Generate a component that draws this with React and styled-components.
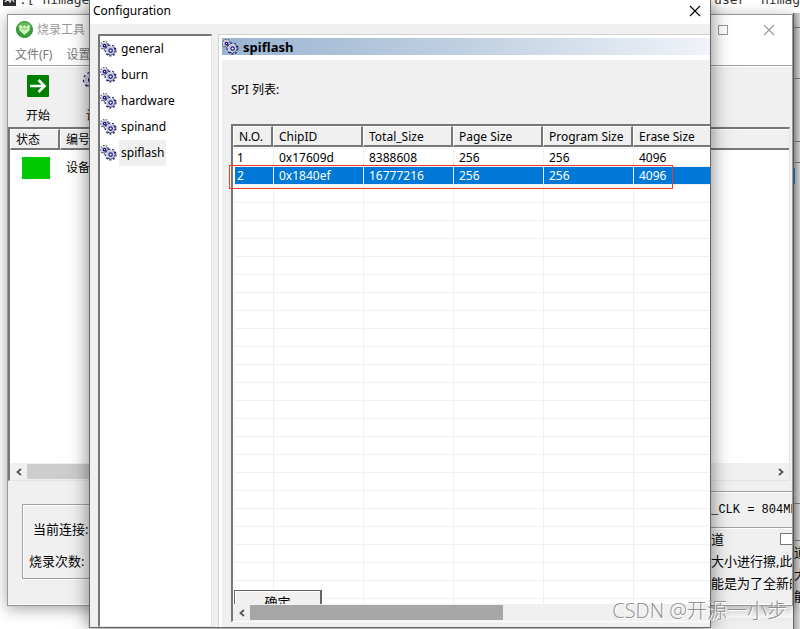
import React, { useState } from "react";
import styled, { createGlobalStyle } from "styled-components";

const pages = ["general", "burn", "hardware", "spinand", "spiflash"];

const columns = [
  { name: "N.O.", width: 40 },
  { name: "ChipID", width: 90 },
  { name: "Total_Size", width: 90 },
  { name: "Page Size", width: 90 },
  { name: "Program Size", width: 90 },
  { name: "Erase Size", width: 90 },
];

const chips = [
  ["1", "0x17609d", "8388608", "256", "256", "4096"],
  ["2", "0x1840ef", "16777216", "256", "256", "4096"],
];

const emptyRows = Array.from({ length: 60 });

export default function App() {
  const [page, setPage] = useState("spiflash");
  const [selected, setSelected] = useState(1);

  return (
    <Desktop>
      <GlobalStyle />
      <Editor>
        <PromptIcon />
        <span>:[ nimage</span>
        <span>user&nbsp; nimage</span>
      </Editor>
      <Underlay />
      <SideWindow />
      <MainWindow />
      <Dialog>
        <DialogTitle>
          <h1>Configuration</h1>
          <IconButton type="button" aria-label="close">
            <CloseIcon color="#000" />
          </IconButton>
        </DialogTitle>
        <DialogBody>
          {/* page list */}
          <PageList>
            {pages.map((name) => (
              <PageButton
                key={name}
                type="button"
                $active={name === page}
                onClick={() => setPage(name)}
              >
                <GearsIcon />
                <span>{name}</span>
              </PageButton>
            ))}
          </PageList>
          {/* end of page list */}
          <Page>
            <PageTitle>
              <GearsIcon />
              <h2>{page}</h2>
            </PageTitle>
            <PageContent>
              <p>SPI 列表:</p>
              <ListWrap>
                <ListBox>
                  <ListView>
                    <ChipTable>
                      <colgroup>
                        {columns.map((col) => (
                          <col key={col.name} width={col.width} />
                        ))}
                      </colgroup>
                      <thead>
                        <tr>
                          {columns.map((col) => (
                            <th key={col.name}>
                              <HeaderCell>{col.name}</HeaderCell>
                            </th>
                          ))}
                        </tr>
                      </thead>
                      <tbody>
                        {chips.map((chip, index) => (
                          <ChipRow
                            key={chip[0]}
                            $selected={index === selected}
                            onClick={() => setSelected(index)}
                          >
                            {chip.map((value, i) => (
                              <td key={i}>{value}</td>
                            ))}
                          </ChipRow>
                        ))}
                        {emptyRows.map((_, index) => (
                          <ChipRow key={index}>
                            {columns.map((col) => (
                              <td key={col.name} />
                            ))}
                          </ChipRow>
                        ))}
                      </tbody>
                    </ChipTable>
                    <OkButton type="button">确定</OkButton>
                  </ListView>
                  <ScrollBar>
                    <ArrowButton type="button" aria-label="scroll left">
                      <Arrow />
                    </ArrowButton>
                    <Thumb $size="53%" $color="#a6a6a6" />
                  </ScrollBar>
                </ListBox>
                <Highlight />
              </ListWrap>
            </PageContent>
          </Page>
        </DialogBody>
      </Dialog>
      <Watermark>CSDN @开源一小步</Watermark>
    </Desktop>
  );
}

function MainWindow() {
  return (
    <Window>
      <TitleBar>
        <LogoIcon />
        <span>烧录工具</span>
        <WindowButtons>
          <IconButton type="button" aria-label="maximize">
            <svg width="12" height="12" viewBox="0 0 12 12">
              <rect x="1.5" y="1.5" width="9" height="9" fill="none" stroke="#999" />
            </svg>
          </IconButton>
          <IconButton type="button" aria-label="close">
            <CloseIcon color="#999" />
          </IconButton>
        </WindowButtons>
      </TitleBar>
      <MenuBar>
        <button type="button">文件(F)</button>
        <button type="button">设置</button>
      </MenuBar>
      <ToolBar>
        <ToolButton type="button">
          <StartIcon />
          开始
        </ToolButton>
        <ToolButton type="button">
          <BigGearIcon />
          设置
        </ToolButton>
      </ToolBar>
      <DeviceList>
        <DeviceTable>
          <colgroup>
            <col width="50" />
            <col />
          </colgroup>
          <thead>
            <tr>
              <th>
                <HeaderCell>状态</HeaderCell>
              </th>
              <th>
                <HeaderCell $last>编号</HeaderCell>
              </th>
            </tr>
          </thead>
          <tbody>
            <tr>
              <td>
                <Status />
              </td>
              <td>设备</td>
            </tr>
          </tbody>
        </DeviceTable>
        <ScrollBar>
          <ArrowButton type="button" aria-label="scroll left">
            <Arrow />
          </ArrowButton>
          <Thumb $size="60%" $color="#cdcdcd" />
          <Spacer />
          <ArrowButton type="button" aria-label="scroll right">
            <Arrow right />
          </ArrowButton>
        </ScrollBar>
      </DeviceList>
      <Footer>
        <StatusBox>
          <p>当前连接:</p>
          <p>烧录次数:</p>
        </StatusBox>
        <InfoBox>
          <Clock>U_CLK = 804MB</Clock>
          <Channel>
            道
            <input type="checkbox" aria-label="道" />
          </Channel>
          <p>大小进行擦,此</p>
          <p>能是为了全新的</p>
        </InfoBox>
      </Footer>
    </Window>
  );
}

function SideWindow() {
  return (
    <SideWrapper>
      <SidePart $height="15px" />
      <SidePart $height="51px" />
      <SidePart $height="63px" />
      <SidePart $height="21px" />
      <SidePart $height="5px" $color="transparent" />
      <SideMark />
      <Spacer />
      <SidePart $height="17px" $color="#ccc" />
      <SidePart $height="9px" />
      <SidePart $height="37px" />
      <SideText>
        <span>道</span>
        <span>大</span>
        <span>能</span>
      </SideText>
    </SideWrapper>
  );
}

/* icons */

function Gear({ x, y, r, color }) {
  const tooth = (2 * Math.PI * r) / 18;
  return (
    <g transform={`translate(${x} ${y})`}>
      <circle
        r={r}
        fill="none"
        stroke={color}
        strokeWidth="2.2"
        strokeDasharray={`${tooth} ${tooth}`}
      />
      <circle r={r} fill="#e2e2ea" />
      <path
        d={`M${r * 0.7} ${-r * 0.7}A${r} ${r} 0 0 1 ${-r * 0.7} ${r * 0.7}`}
        fill="none"
        stroke={color}
        strokeWidth="1"
      />
      <circle r={r * 0.75} fill="none" stroke="#b4b4c4" strokeWidth="0.8" />
      <circle r={r * 0.36} fill="#fff" stroke="#10108a" strokeWidth="1.2" />
    </g>
  );
}

function GearsIcon() {
  return (
    <svg width="17" height="16" viewBox="0 0 17 16">
      <Gear x={4.6} y={4.6} r={3.6} color="#55556a" />
      <Gear x={10.6} y={9.6} r={4.9} color="#15155e" />
    </svg>
  );
}

function BigGearIcon() {
  return (
    <svg width="32" height="28" viewBox="0 0 32 28">
      <Gear x={9} y={9} r={7} color="#10107a" />
      <Gear x={21} y={18} r={7} color="#10107a" />
    </svg>
  );
}

function LogoIcon() {
  return (
    <svg width="17" height="17" viewBox="0 0 17 17">
      <circle cx="8.5" cy="8.5" r="8" fill="#3a9e3a" stroke="#2a8a2e" />
      <path d="M1.5 6a7.4 7.4 0 0 1 14 0z" fill="#62b85c" />
      <path
        d="M3 5l2-1.5L6.5 6 8.5 4l2 2L12 3.5 14 5l-.5 4.5L8.5 14 3.5 9.5z"
        fill="#cdf3b8"
      />
      <path
        d="M5.5 8.5L7 7l1.5 2L10 7l1.5 1.5"
        fill="none"
        stroke="#79c76c"
      />
    </svg>
  );
}

function PromptIcon() {
  return (
    <svg width="13" height="14" viewBox="0 0 13 14">
      <rect width="13" height="14" fill="#2b2b33" />
      <path d="M2 10l3-3 2 3 2-4 2 4" fill="none" stroke="#ddd" strokeWidth="1.4" />
    </svg>
  );
}

function StartIcon() {
  return (
    <svg width="22" height="28" viewBox="0 -4 22 28">
      <rect width="22" height="22" rx="1" fill="#008000" />
      <path
        d="M3 11h14M11.5 5l6 6-6 6"
        fill="none"
        stroke="#fff"
        strokeWidth="2.6"
      />
    </svg>
  );
}

function CloseIcon({ color }) {
  return (
    <svg width="12" height="12" viewBox="0 0 12 12">
      <path d="M1 1l10 10M11 1L1 11" stroke={color} strokeWidth="1.1" />
    </svg>
  );
}

function Arrow({ right }) {
  return (
    <svg width="8" height="8" viewBox="0 0 8 8">
      <path
        d={right ? "M2 1l3.5 3L2 7" : "M6 1L2.5 4 6 7"}
        fill="none"
        stroke="#555"
        strokeWidth="1.8"
      />
    </svg>
  );
}

/* styles */

const GlobalStyle = createGlobalStyle`
  * {
    box-sizing: border-box;
  }
  body {
    margin: 0;
    font-family: "Noto Sans", "Noto Sans CJK SC", sans-serif;
    font-size: 12px;
    line-height: 18px;
    color: #000;
  }
  h1, h2, p {
    margin: 0;
    font-size: inherit;
    font-weight: normal;
  }
  button {
    padding: 0;
    border: 0;
    background: none;
    color: inherit;
    font: inherit;
    white-space: nowrap;
  }
  svg {
    display: block;
    flex: none;
  }
`;

const Desktop = styled.main`
  position: relative;
  height: 100vh;
  overflow: hidden;
  background: #fff;
`;

const Editor = styled.div`
  display: flex;
  gap: 3px;
  height: 14px;
  margin: -8px -8px 0 0;
  padding-left: 3px;
  color: #333;
  font-family: "DejaVu Sans Mono", monospace;
  font-size: 13px;
  line-height: 16px;
  white-space: pre;
  span:last-child {
    margin-left: auto;
  }
`;

/* the bottom edge of the window that lies under all others */
const Underlay = styled.div`
  position: absolute;
  right: 7px;
  bottom: 0;
  left: 88px;
  height: 11px;
  background: #f0f0f0;
`;

const SideWrapper = styled.div`
  position: absolute;
  top: 13px;
  right: 0;
  bottom: 0;
  display: flex;
  flex-direction: column;
  width: 7px;
  overflow: hidden;
  border-left: 1px solid #666;
  background: linear-gradient(90deg, #a8a8a8, #dcdcdc);
`;

const SidePart = styled.div`
  flex: none;
  height: ${(props) => props.$height};
  border-bottom: 1px solid ${(props) => props.$color || "#777"};
`;

const SideMark = styled.div`
  flex: none;
  width: 1px;
  height: 16px;
  background: #0078d7;
`;

const SideText = styled.div`
  display: flex;
  flex-direction: column;
  height: 88px;
  font-size: 13px;
  line-height: 22px;
`;

const Spacer = styled.div`
  flex: 1;
`;

const Window = styled.section`
  position: absolute;
  top: 14px;
  right: 7px;
  bottom: 23px;
  left: 7px;
  display: flex;
  flex-direction: column;
  border: 1px solid #999;
  background: #f0f0f0;
  box-shadow: 0 3px 14px rgba(0, 0, 0, 0.35);
`;

const TitleBar = styled.header`
  display: flex;
  align-items: center;
  gap: 4px;
  height: 29px;
  padding-left: 8px;
  background: #fff;
  color: #999;
`;

const WindowButtons = styled.div`
  display: flex;
  margin-left: auto;
`;

const IconButton = styled.button`
  display: flex;
  align-items: center;
  justify-content: center;
  width: 46px;
  height: 28px;
`;

const MenuBar = styled.nav`
  display: flex;
  gap: 14px;
  height: 22px;
  padding-left: 7px;
  border-bottom: 1px solid #a0a0a0;
  background: #fff;
  color: #777;
`;

const ToolBar = styled.div`
  display: flex;
  height: 61px;
  border-top: 1px solid #fff;
`;

const ToolButton = styled.button`
  display: flex;
  flex-direction: column;
  align-items: center;
  justify-content: space-between;
  width: 60px;
  padding: 4px 0 2px;
`;

const DeviceList = styled.div`
  display: flex;
  flex: 1;
  flex-direction: column;
  min-height: 0;
  margin-right: 2px;
  border: 1px solid #e3e3e3;
  border-top: 2px solid #777;
  border-left: 2px solid #777;
  background: #fff;
`;

const HeaderCell = styled.div`
  height: 21px;
  padding-left: 5px;
  border: 1px solid #fff;
  border-right: ${(props) => (props.$last ? "0" : "2px solid #777")};
  border-bottom: 2px solid #777;
  background: #f0f0f0;
  line-height: 19px;
`;

const DeviceTable = styled.table`
  width: 100%;
  border-spacing: 0;
  table-layout: fixed;
  th,
  td {
    padding: 0;
    font-weight: normal;
    text-align: left;
  }
  td {
    height: 36px;
    padding-left: 6px;
  }
  td:first-child {
    padding-left: 12px;
  }
`;

const Status = styled.div`
  width: 28px;
  height: 22px;
  background: #00c800;
`;

const ScrollBar = styled.div`
  display: flex;
  flex: none;
  height: 17px;
  margin-top: auto;
  background: #f0f0f0;
`;

const ArrowButton = styled.button`
  display: flex;
  align-items: center;
  justify-content: center;
  width: 17px;
`;

const Thumb = styled.div`
  width: ${(props) => props.$size};
  height: 15px;
  margin-top: 1px;
  background: ${(props) => props.$color};
`;

const Footer = styled.footer`
  display: flex;
  justify-content: space-between;
  height: 124px;
  border-bottom: 1px solid #fff;
`;

const StatusBox = styled.div`
  display: flex;
  flex-direction: column;
  gap: 14px;
  width: 200px;
  height: 75px;
  margin: 23px 0 0 14px;
  padding: 15px 0 0 6px;
  border: 1px solid #a0a0a0;
  box-shadow: inset 1px 1px #fff, 1px 1px #fff;
  font-size: 13px;
  p:first-child {
    padding-left: 4px;
  }
`;

const InfoBox = styled.div`
  width: 88px;
  padding-top: 10px;
  overflow: hidden;
  font-size: 13px;
  line-height: 22px;
  white-space: nowrap;
  p {
    padding-left: 7px;
  }
`;

const Clock = styled.div`
  height: 37px;
  border-top: 1px solid #a0a0a0;
  border-bottom: 1px solid #a0a0a0;
  box-shadow: inset 0 1px #fff;
  font-family: "Liberation Mono", monospace;
  font-size: 12px;
  line-height: 37px;
`;

const Channel = styled.label`
  display: flex;
  align-items: center;
  justify-content: space-between;
  height: 22px;
  padding-left: 7px;
  box-shadow: inset 0 1px #fff;
  input {
    appearance: none;
    width: 12px;
    height: 12px;
    margin: 0;
    border: 1px solid #777;
    border-right: 0;
    background: #fff;
  }
`;

const Dialog = styled.section`
  position: absolute;
  top: 0;
  right: 89px;
  bottom: 1px;
  left: 89px;
  display: flex;
  flex-direction: column;
  border: 1px solid #666;
  border-top: 0;
  background: #f0f0f0;
  box-shadow: 0 0 18px rgba(0, 0, 0, 0.5);
`;

const DialogTitle = styled.header`
  display: flex;
  align-items: center;
  justify-content: space-between;
  height: 24px;
  padding-left: 3px;
  background: #fff;
  h1 {
    padding-bottom: 2px;
  }
  button {
    width: 30px;
    height: 24px;
    padding-bottom: 2px;
  }
`;

const DialogBody = styled.div`
  display: flex;
  flex: 1;
  gap: 6px;
  min-height: 0;
  padding: 10px 0 0 8px;
`;

const PageList = styled.nav`
  flex: none;
  width: 114px;
  border: 1px solid #e3e3e3;
  border-top: 2px solid #777;
  border-left: 2px solid #777;
  background: #fff;
`;

const PageButton = styled.button`
  display: flex;
  align-items: center;
  gap: 2px;
  width: 100%;
  height: 26px;
  span {
    padding: 0 2px;
    background: ${(props) => (props.$active ? "#f0f0f0" : "none")};
    line-height: 26px;
  }
`;

const Page = styled.section`
  display: flex;
  flex: 1;
  flex-direction: column;
  min-width: 0;
  padding: 3px 0 0 3px;
  border-top: 1px solid #d4d4d4;
  border-left: 1px solid #d4d4d4;
  background: #fff;
`;

const PageTitle = styled.div`
  display: flex;
  flex: none;
  align-items: center;
  gap: 4px;
  height: 17px;
  margin-bottom: 5px;
  background: linear-gradient(90deg, #99b4d1, #c0d0e2 50%, #f0f3f8);
  h2 {
    font-size: 13px;
    font-weight: bold;
  }
`;

const PageContent = styled.div`
  display: flex;
  flex: 1;
  flex-direction: column;
  gap: 25px;
  min-height: 0;
  padding: 21px 0 5px 9px;
  background: #f0f0f0;
`;

const ListWrap = styled.div`
  position: relative;
  display: flex;
  flex: 1;
  min-height: 0;
`;

const ListBox = styled.div`
  display: flex;
  flex: 1;
  flex-direction: column;
  min-width: 0;
  border-top: 2px solid #777;
  border-bottom: 1px solid #fff;
  border-left: 2px solid #777;
  background: #fff;
`;

const ListView = styled.div`
  position: relative;
  flex: 1;
  min-height: 0;
  overflow: hidden;
`;

const ChipTable = styled.table`
  width: 490px;
  border-spacing: 0;
  table-layout: fixed;
  th {
    height: 23px;
    padding: 0 0 1px;
    border-bottom: 1px solid #f0f0f0;
    font-weight: normal;
    text-align: left;
    white-space: nowrap;
  }
`;

const ChipRow = styled.tr`
  color: ${(props) => (props.$selected ? "#fff" : "#000")};
  td {
    height: 18px;
    padding: 0 0 0 5px;
    border-bottom: 1px solid #f0f0f0;
    border-left: 1px solid #f0f0f0;
    background: ${(props) => (props.$selected ? "#0078d7" : "#fff")};
    line-height: 17px;
  }
  td:first-child {
    padding-left: 2px;
    border-left: 2px solid #fff;
  }
`;

/* only its top shows above the scroll bar */
const OkButton = styled.button`
  position: absolute;
  bottom: -10px;
  left: 1px;
  width: 88px;
  height: 24px;
  border: 1px solid #666;
  border-right: 2px solid #666;
  background: #f0f0f0;
  box-shadow: inset 1px 1px #fff;
  font-size: 13px;
  line-height: 18px;
`;

const Highlight = styled.div`
  position: absolute;
  top: 41px;
  left: -2px;
  width: 444px;
  height: 24px;
  border: 1px solid #f0392b;
  pointer-events: none;
`;

const Watermark = styled.div`
  position: absolute;
  right: 13px;
  bottom: 5px;
  color: #909090;
  font-family: "Open Sans", "Noto Sans CJK SC", sans-serif;
  font-size: 20px;
  font-weight: 300;
  line-height: 26px;
  text-shadow: 1px 1px #fff;
  white-space: nowrap;
`;
